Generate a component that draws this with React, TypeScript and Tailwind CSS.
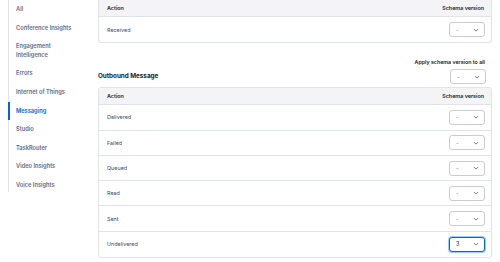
const NAV = [
  'All',
  'Conference Insights',
  'Engagement Intelligence',
  'Errors',
  'Internet of Things',
  'Messaging',
  'Studio',
  'TaskRouter',
  'Video Insights',
  'Voice Insights',
];

const OUTBOUND: Array<{ action: string; value: string; focused?: boolean }> = [
  { action: 'Delivered', value: '-' },
  { action: 'Failed', value: '-' },
  { action: 'Queued', value: '-' },
  { action: 'Read', value: '-' },
  { action: 'Sent', value: '-' },
  { action: 'Undelivered', value: '3', focused: true },
];

function Chevron() {
  return (
    <svg width="6" height="6" viewBox="0 0 8 8" fill="none" aria-hidden>
      <path d="M1.5 3l2.5 2.5L6.5 3" stroke="#606b85" strokeWidth="1.2" strokeLinecap="round" strokeLinejoin="round" />
    </svg>
  );
}

function VersionSelect({ value, focused }: { value: string; focused?: boolean }) {
  return (
    <div
      className={`flex h-[15px] w-[36px] items-center justify-between rounded-[3px] bg-white pl-[6px] pr-[5px] text-[5.5px] ${
        focused
          ? 'border-[1.5px] border-[#0263e0] text-[#121c2d] shadow-[0_0_0_1px_#99cdff]'
          : 'border border-[#c9ccd6] text-[#606b85]'
      }`}
    >
      <span>{value}</span>
      <Chevron />
    </div>
  );
}

function HeaderRow() {
  return (
    <div className="flex h-[17px] items-center justify-between border-b border-[#e1e3ea] bg-[#f4f4f6] pl-[8px] pr-[7px] text-[5.4px] font-semibold text-[#121c2d]">
      <span>Action</span>
      <span>Schema version</span>
    </div>
  );
}

function Row({ action, value, focused, last }: { action: string; value: string; focused?: boolean; last?: boolean }) {
  return (
    <div
      className={`flex h-[25.3px] items-center justify-between pl-[8px] pr-[6px] ${last ? '' : 'border-b border-[#e1e3ea]'}`}
    >
      <span className="text-[5.4px] text-[#394762]">{action}</span>
      <VersionSelect value={value} focused={focused} />
    </div>
  );
}

export default function App() {
  return (
    <div className="flex h-[262px] w-[500px] overflow-hidden bg-white font-['Inter',sans-serif]">
      {/* Sidebar */}
      <aside className="w-[98px] shrink-0 pl-[8px]">
        <nav className="flex h-[192px] w-[74px] flex-col border-l border-[#e1e3ea]">
          {NAV.map((item) => {
            const active = item === 'Messaging';
            return (
              <div
                key={item}
                className={`-ml-px border-l-2 py-[5px] pl-[6px] pr-[4px] text-[5.7px] font-semibold leading-[8.6px] ${
                  active ? 'border-[#0263e0] text-[#0263e0]' : 'border-transparent text-[#606b85]'
                }`}
              >
                {item}
              </div>
            );
          })}
        </nav>
      </aside>

      {/* Main */}
      <main className="flex-1 pr-[8px]">
        <div className="overflow-hidden rounded-b-[3px] border border-t-0 border-[#e1e3ea]">
          <HeaderRow />
          <Row action="Received" value="-" last />
        </div>

        <div className="flex h-[44px] items-end justify-between pb-[3px] pr-[6px]">
          <h2 className="mb-[3px] text-[6.3px] font-bold text-[#121c2d]">Outbound Message</h2>
          <div className="flex flex-col items-end gap-[2px]">
            <span className="pr-px text-[5.3px] font-semibold text-[#121c2d]">Apply schema version to all</span>
            <VersionSelect value="-" />
          </div>
        </div>

        <div className="overflow-hidden rounded-[3px] border border-[#e1e3ea]">
          <HeaderRow />
          {OUTBOUND.map((r, i) => (
            <Row key={r.action} action={r.action} value={r.value} focused={r.focused} last={i === OUTBOUND.length - 1} />
          ))}
        </div>
      </main>
    </div>
  );
}
